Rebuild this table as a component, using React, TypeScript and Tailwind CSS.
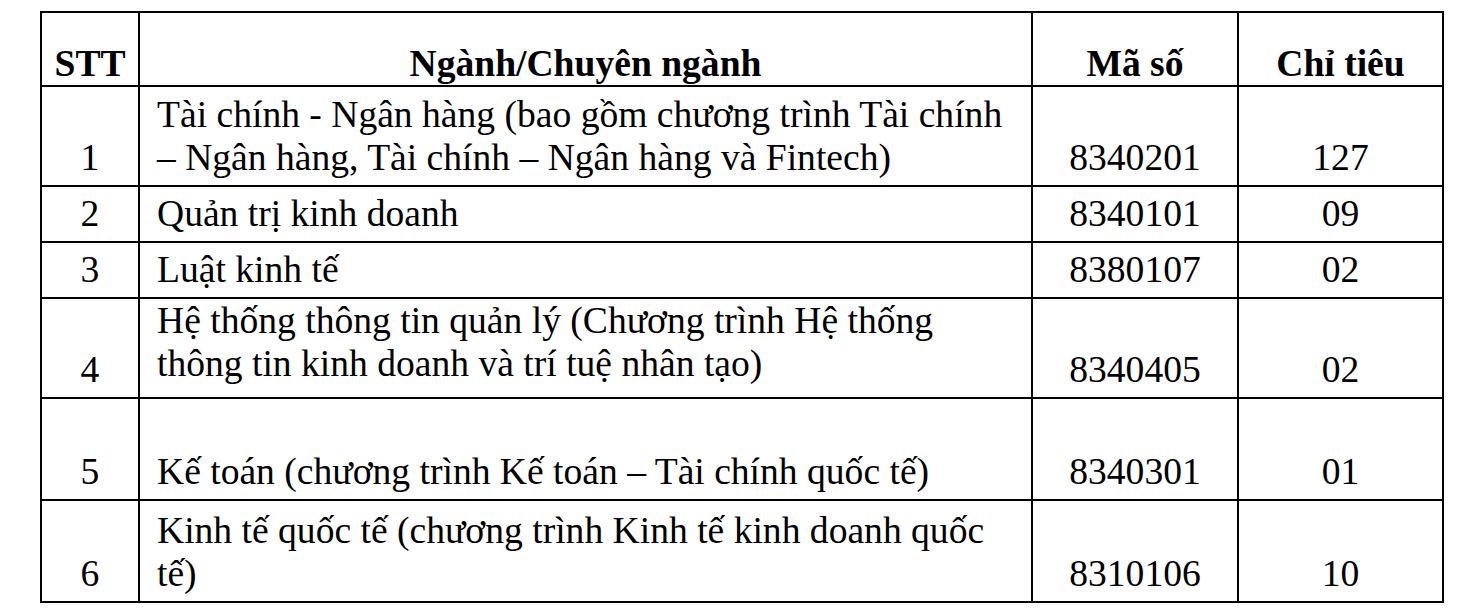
const rows = [
  {
    stt: '1',
    name: ['Tài chính - Ngân hàng (bao gồm chương trình Tài chính', '– Ngân hàng, Tài chính – Ngân hàng và Fintech)'],
    code: '8340201',
    quota: '127',
    h: 'h-[100px]',
    namePad: 'pb-[6px]',
  },
  { stt: '2', name: ['Quản trị kinh doanh'], code: '8340101', quota: '09', h: 'h-[56px]', namePad: 'pb-[6px]' },
  { stt: '3', name: ['Luật kinh tế'], code: '8380107', quota: '02', h: 'h-[56px]', namePad: 'pb-[6px]' },
  {
    stt: '4',
    name: ['Hệ thống thông tin quản lý (Chương trình Hệ thống', 'thông tin kinh doanh và trí tuệ nhân tạo)'],
    code: '8340405',
    quota: '02',
    h: 'h-[100px]',
    namePad: 'pb-[12px]',
  },
  {
    stt: '5',
    name: ['Kế toán (chương trình Kế toán – Tài chính quốc tế)'],
    code: '8340301',
    quota: '01',
    h: 'h-[102px]',
    namePad: 'pb-[6px]',
  },
  {
    stt: '6',
    name: ['Kinh tế quốc tế (chương trình Kinh tế kinh doanh quốc', 'tế)'],
    code: '8310106',
    quota: '10',
    h: 'h-[102px]',
    namePad: 'pb-[6px]',
  },
];

export default function App() {
  return (
    <div className="min-h-screen bg-white pt-[11px] pl-[40px] text-black font-['Liberation_Serif','Times_New_Roman',serif] text-[37.6px] leading-[42.5px]">
      <table className="border-collapse border-2 border-black w-[1402px] table-fixed">
        <colgroup>
          <col className="w-[98px]" />
          <col className="w-[893px]" />
          <col className="w-[206px]" />
          <col className="w-[205px]" />
        </colgroup>
        <thead>
          <tr className="h-[74px]">
            <th className="border-2 border-black align-bottom text-center font-bold p-0">STT</th>
            <th className="border-2 border-black align-bottom text-center font-bold p-0">Ngành/Chuyên ngành</th>
            <th className="border-2 border-black align-bottom text-center font-bold p-0">Mã số</th>
            <th className="border-2 border-black align-bottom text-center font-bold p-0">Chỉ tiêu</th>
          </tr>
        </thead>
        <tbody>
          {rows.map((r) => (
            <tr key={r.stt} className={r.h}>
              <td className="border-2 border-black align-bottom text-center pb-[6px] pt-0">{r.stt}</td>
              <td className={`border-2 border-black align-bottom pl-[17px] pt-0 whitespace-nowrap ${r.namePad}`}>
                {r.name.map((line, i) => (
                  <div key={i}>{line}</div>
                ))}
              </td>
              <td className="border-2 border-black align-bottom text-center pb-[6px] pt-0">{r.code}</td>
              <td className="border-2 border-black align-bottom text-center pb-[6px] pt-0">{r.quota}</td>
            </tr>
          ))}
        </tbody>
      </table>
    </div>
  );
}
